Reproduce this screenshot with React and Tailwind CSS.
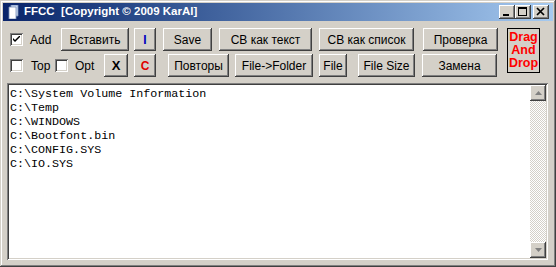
import React from "react";

const raised =
  "bg-[#d4d0c8] shadow-[inset_-1px_-1px_#404040,inset_1px_1px_#ffffff,inset_-2px_-2px_#808080,inset_2px_2px_#d4d0c8]";
const sunken =
  "shadow-[inset_1px_1px_#808080,inset_-1px_-1px_#ffffff,inset_2px_2px_#404040,inset_-2px_-2px_#d4d0c8]";

function Btn({ className, children }) {
  return (
    <button
      className={`h-[23px] shrink-0 flex items-center justify-center text-[12px] leading-none ${raised} ${className}`}
    >
      {children}
    </button>
  );
}

function Check({ checked, className }) {
  return (
    <span className={`w-[13px] h-[13px] shrink-0 bg-white ${sunken} flex items-center justify-center ${className}`}>
      {checked && (
        <svg width="7" height="7" viewBox="0 0 7 7">
          <path d="M0 2 L0 4 L2 6 L7 1 L7 -1 L2 4 Z" fill="#000" />
        </svg>
      )}
    </span>
  );
}

function TitleButton({ children, className }) {
  return (
    <span className={`w-[16px] h-[14px] ${raised} flex ${className}`}>
      <svg width="16" height="14" viewBox="0 0 16 14">
        {children}
      </svg>
    </span>
  );
}

const lines = [
  "C:\\System Volume Information",
  "C:\\Temp",
  "C:\\WINDOWS",
  "C:\\Bootfont.bin",
  "C:\\CONFIG.SYS",
  "C:\\IO.SYS",
];

export default function App() {
  return (
    <div className="w-[556px] h-[267px] bg-[#d4d0c8] p-[3px] flex flex-col font-['Liberation_Sans',Arial,sans-serif] shadow-[inset_-1px_-1px_#404040,inset_1px_1px_#d4d0c8,inset_-2px_-2px_#808080,inset_2px_2px_#ffffff]">
      {/* title bar */}
      <div className="h-[18px] shrink-0 flex items-center pr-[4px] bg-gradient-to-r from-[#0a246a] to-[#a6caf0]">
        <svg width="12" height="14" viewBox="0 0 12 14" className="ml-[5px]">
          <path d="M3 0 H10 V11 H3 Z" fill="#c8d8f0" stroke="#7890b8" strokeWidth="0.8" />
          <path d="M1 2 H8 V14 H1 Z" fill="#ffffff" stroke="#7890b8" strokeWidth="0.8" />
        </svg>
        <span className="ml-[4px] text-white font-bold text-[11.5px] whitespace-pre leading-none">
          FFCC  [Copyright © 2009 KarAl]
        </span>
        <span className="ml-auto flex">
          <TitleButton>
            <rect x="4" y="9" width="6" height="2" fill="#000" />
          </TitleButton>
          <TitleButton>
            <rect x="3" y="2" width="9" height="9" fill="#000" />
            <rect x="4" y="4" width="7" height="6" fill="#d4d0c8" />
          </TitleButton>
          <TitleButton className="ml-[2px]">
            <path d="M4 3 L11 10 M11 3 L4 10" stroke="#000" strokeWidth="1.7" />
          </TitleButton>
        </span>
      </div>

      {/* controls */}
      <div className="mt-[7px] flex items-start text-black">
        <div className="flex flex-col gap-[3px]">
          <div className="flex items-center h-[23px] text-[12px]">
            <Check checked className="ml-[7px]" />
            <span className="ml-[7px] w-[31px]">Add</span>
            <Btn className="w-[68px] text-black">Вставить</Btn>
            <Btn className="ml-[5px] w-[22px] font-bold text-[#0000c0]">I</Btn>
            <Btn className="ml-[7px] w-[49px] text-black">Save</Btn>
            <Btn className="ml-[7px] w-[93px] text-black">СВ как текст</Btn>
            <Btn className="ml-[7px] w-[95px] text-black">СВ как список</Btn>
            <Btn className="ml-[9px] w-[75px] text-black">Проверка</Btn>
          </div>
          <div className="flex items-center h-[23px] text-[12px]">
            <Check className="ml-[7px]" />
            <span className="ml-[8px] w-[24px]">Top</span>
            <Check />
            <span className="ml-[7px] w-[29px]">Opt</span>
            <Btn className="w-[24px] font-bold text-[13px] text-black">X</Btn>
            <Btn className="ml-[6px] w-[22px] font-bold text-[#e00000]">C</Btn>
            <Btn className="ml-[12px] w-[61px] text-black">Повторы</Btn>
            <Btn className="ml-[6px] w-[78px] text-black">File-&gt;Folder</Btn>
            <Btn className="ml-[6px] w-[28px] text-black">File</Btn>
            <Btn className="ml-[11px] w-[57px] text-black">File Size</Btn>
            <Btn className="ml-[7px] w-[75px] text-black">Замена</Btn>
          </div>
        </div>
        <div className="ml-[9px] w-[33px] h-[45px] border border-black flex flex-col items-center justify-center text-[#ff0000] font-bold text-[12.5px] leading-[13px]">
          <span>Drag</span>
          <span>And</span>
          <span>Drop</span>
        </div>
      </div>

      {/* list */}
      <div className={`mt-[6px] ml-[4px] w-[541px] h-[177px] bg-white p-[2px] flex ${sunken}`}>
        <div className="flex-1 pt-[2px] pl-[1px] font-['Liberation_Mono','Courier_New',monospace] text-[11.7px] leading-[14px] text-black whitespace-pre">
          {lines.map((l) => (
            <div key={l}>{l}</div>
          ))}
        </div>
        <div className="w-[16px] flex flex-col">
          <span className={`w-[16px] h-[16px] ${raised} flex items-center justify-center`}>
            <svg width="7" height="4" viewBox="0 0 7 4">
              <path d="M3.5 0 L7 4 H0 Z" fill="#808080" />
            </svg>
          </span>
          <span className="flex-1 bg-[image:repeating-conic-gradient(#d4d0c8_0_25%,#ffffff_0_50%)] bg-[length:2px_2px]" />
          <span className={`w-[16px] h-[16px] ${raised} flex items-center justify-center`}>
            <svg width="7" height="4" viewBox="0 0 7 4">
              <path d="M0 0 H7 L3.5 4 Z" fill="#808080" />
            </svg>
          </span>
        </div>
      </div>
    </div>
  );
}
